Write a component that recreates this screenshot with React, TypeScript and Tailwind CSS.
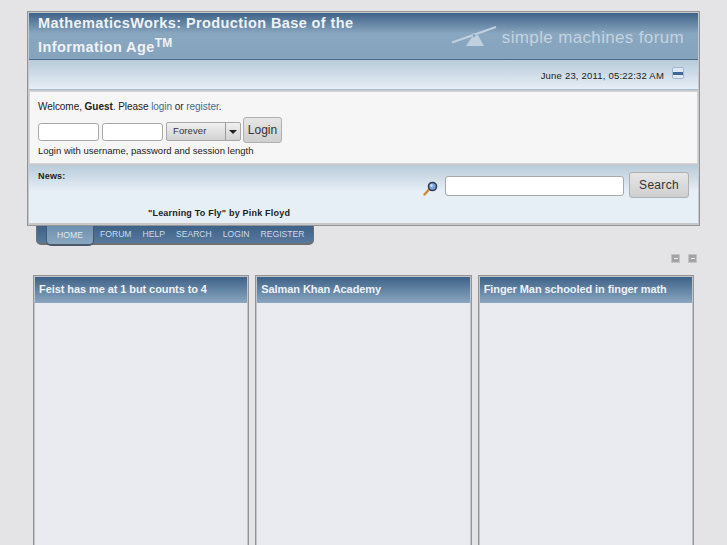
import React from 'react';

const font = '[font-family:"Liberation_Sans",Arial,sans-serif]';

function Logo() {
  return (
    <svg width="46" height="24" viewBox="0 0 46 24" className="shrink-0">
      <path d="M1 17.5 L45 2" stroke="#bfd0de" strokeWidth="2" fill="none" />
      <path d="M21 12 L27 10 L33 21 L15 21 Z" fill="#bfd0de" />
      <circle cx="23" cy="10.5" r="2" fill="#8aa7c0" stroke="#bfd0de" strokeWidth="1" />
    </svg>
  );
}

function Magnifier() {
  return (
    <svg width="15" height="15" viewBox="0 0 15 15">
      <path d="M1.5 13.5 L6 8.5" stroke="#c98a3a" strokeWidth="2.4" strokeLinecap="round" />
      <circle cx="9.5" cy="5.5" r="4" fill="#7fa4dc" stroke="#2d3f55" strokeWidth="1.6" />
      <circle cx="8.5" cy="4.5" r="1.2" fill="#dbe8f8" />
    </svg>
  );
}

function Collapse() {
  return (
    <div className="mb-[4px] flex h-[12px] w-[12px] items-center rounded-[2px] border border-[#a3b8d0] bg-[#dfe8f3]">
      <div className="h-[3px] w-full bg-[#3f6796]" />
    </div>
  );
}

function SmallToggle() {
  return (
    <div className="flex h-[7px] w-[7px] items-center justify-center bg-[#a3a3a5] outline outline-1 outline-[#c4c4c6]">
      <div className="h-[1px] w-[4px] bg-[#eeeeee]" />
    </div>
  );
}

function Panel({ title }: { title: string }) {
  return (
    <div className="h-[270px] flex-1 border border-b-0 border-[#949496] bg-[#c4c4c6] px-[1px] pt-[1px]">
      <div className="h-full bg-[#e9ebf0]">
        <div className="flex h-[26px] items-center bg-gradient-to-b from-[#3e6288] to-[#8aa7c0] pb-[1px] pl-[4px] text-[11px] font-bold tracking-[-0.08px] text-[#eef2f6]">
          {title}
        </div>
      </div>
    </div>
  );
}

export default function App() {
  const navItems = ['FORUM', 'HELP', 'SEARCH', 'LOGIN', 'REGISTER'];

  return (
    <div className={`h-[545px] w-[727px] overflow-hidden bg-[#e4e4e6] pt-[11px] ${font}`}>
      {/* Header box */}
      <div className="mx-[27px] h-[215px] w-[673px] border border-[#949496] bg-[#c8c8ca] p-[1px]">
        <div className="flex h-[47px] items-stretch justify-between border-b border-[#4b6a8a] bg-[linear-gradient(#3e6288,#8aa7c0_45%,#86a3bd)]">
          <div className="-mt-[2px] w-[350px] pl-[9px] text-[14.5px] leading-[24px] font-bold tracking-[0.4px] text-[#eef2f6]">
            MathematicsWorks: Production Base of the Information Age
            <span className="relative -top-[5px] text-[12px] leading-none">TM</span>
          </div>
          <div className="flex items-start gap-[5px] pr-[14px] pt-[12px]">
            <Logo />
            <span className="text-[17px] leading-[26px] tracking-[0.35px] text-[#c3d3e0]">simple machines forum</span>
          </div>
        </div>
        <div className="flex h-[30px] items-center justify-end border-b border-[#a9bdce] bg-gradient-to-b from-[#b9cbd9] to-[#e6eef6] pr-[14px] pt-[1px]">
          <span className="mr-[8px] mt-[2px] text-[9.5px] tracking-[0.2px] text-[#222222]">June 23, 2011, 05:22:32 AM</span>
          <Collapse />
        </div>
        <div className="my-[1px] h-[73px] border border-[#d5d5d5] bg-[#f6f6f6] pl-[8px] pt-[8px]">
          <div className="text-[10px] leading-[13px] tracking-[-0.05px] text-[#222222]">
            Welcome, <b>Guest</b>. Please <span className="text-[#476c8e]">login</span> or <span className="text-[#476c8e]">register</span>.
          </div>
          <div className="mt-[8px] flex items-start gap-[3px]">
            <div className="mt-[2px] h-[18px] w-[61px] rounded-[3px] border border-[#a8a8a8] bg-white" />
            <div className="mt-[2px] h-[18px] w-[61px] rounded-[3px] border border-[#a8a8a8] bg-white" />
            <div className="mt-[1px] flex h-[19px] w-[75px] items-center rounded-[2px] border border-[#a8a8a8] bg-gradient-to-b from-[#f0f0f0] to-[#d2d2d2]">
              <span className="flex-1 pl-[6px] text-[9.5px] tracking-[0.1px] text-[#333333]">Forever</span>
              <div className="flex h-full w-[15px] items-center justify-center border-l border-[#9a9a9a]">
                <div className="h-0 w-0 border-x-[4px] border-t-[4px] border-x-transparent border-t-[#222222]" />
              </div>
            </div>
            <div className="-mt-[4px] -ml-[1px] flex h-[26px] w-[39px] items-center justify-center rounded-[3px] border border-[#b0b0b0] bg-gradient-to-b from-[#e6e6e6] to-[#cfcfcf] text-[12px] text-[#333333]">
              Login
            </div>
          </div>
          <div className="mt-[2px] text-[9.5px] leading-[11px] text-[#222222]">Login with username, password and session length</div>
        </div>
        <div className="flex h-[58px] justify-between bg-[linear-gradient(#b9cbd9,#e6eef6_45%,#e6eef6)]">
          <div className="flex flex-col pl-[9px]">
            <div className="pt-[5px] text-[9px] leading-[12px] font-bold tracking-[0.2px] text-[#222222]">News:</div>
            <div className="mt-[25px] pl-[110px] text-[9px] leading-[12px] font-bold tracking-[0.2px] text-[#222222]">"Learning To Fly" by Pink Floyd</div>
          </div>
          <div className="flex items-start pr-[9px] pt-[7px]">
            <div className="mr-[7px] mt-[9px]">
              <Magnifier />
            </div>
            <div className="mt-[4px] h-[20px] w-[179px] rounded-[3px] border border-[#a8a8a8] bg-white" />
            <div className="ml-[5px] flex h-[26px] w-[60px] items-center justify-center rounded-[3px] border border-[#b0b0b0] bg-gradient-to-b from-[#e6e6e6] to-[#cfcfcf] text-[12px] tracking-[0.3px] text-[#333333]">
              Search
            </div>
          </div>
        </div>
      </div>

      {/* Nav tabs */}
      <div className="ml-[36px] flex h-[19px] w-[278px] rounded-b-[5px] border-x border-b-2 border-[#6f6f72] bg-gradient-to-b from-[#3e6288] to-[#56789b] pl-[9px]">
        <div className="relative z-10 flex h-[20px] w-[48px] items-center justify-center rounded-b-[5px] border-x border-b-2 border-[#4a5a6c] bg-gradient-to-b from-[#6d90b1] to-[#8aa7c0] text-[8.6px] text-[#dfe8f0]">
          HOME
        </div>
        <div className="flex items-center gap-[11px] pl-[6px] text-[8.6px] text-[#cfdbe6]">
          {navItems.map(item => (
            <span key={item}>{item}</span>
          ))}
        </div>
      </div>

      {/* Toggle icons */}
      <div className="mr-[31px] mt-[10px] flex justify-end gap-[10px]">
        <SmallToggle />
        <SmallToggle />
      </div>

      {/* Panels */}
      <div className="ml-[33px] mt-[13px] flex w-[661px] gap-[6px]">
        <Panel title="Feist has me at 1 but counts to 4" />
        <Panel title="Salman Khan Academy" />
        <Panel title="Finger Man schooled in finger math" />
      </div>
    </div>
  );
}
